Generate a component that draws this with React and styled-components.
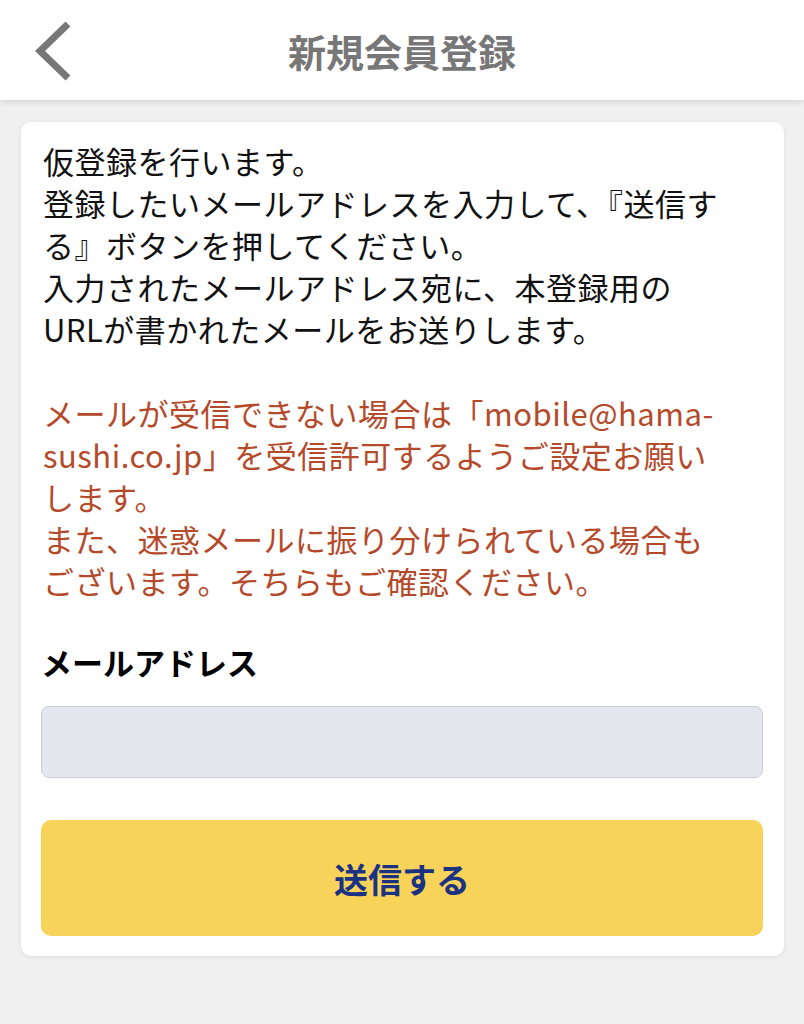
import styled, { createGlobalStyle } from "styled-components";

const GlobalStyle = createGlobalStyle`
  html, body {
    margin: 0;
    padding: 0;
    background: #f0f0f0;
    font-family: "Noto Sans CJK JP", "Noto Sans", sans-serif;
  }
  * { box-sizing: border-box; }
`;

const Page = styled.div`
  min-height: 1024px;
  background: #f0f0f0;
`;

const Header = styled.header`
  position: relative;
  height: 100px;
  background: #fff;
  display: flex;
  align-items: center;
  justify-content: center;
  box-shadow: 0 2px 6px rgba(0, 0, 0, 0.12);
`;

const BackButton = styled.button`
  position: absolute;
  left: 28px;
  top: 18px;
  width: 50px;
  height: 66px;
  border: none;
  background: none;
  padding: 0;
  cursor: pointer;
`;

const Title = styled.h1`
  margin: 0;
  font-size: 38px;
  font-weight: 700;
  color: #777;
  letter-spacing: 0;
`;

const Card = styled.main`
  margin: 22px 20px 0 21px;
  background: #fff;
  border-radius: 10px;
  box-shadow: 0 1px 4px rgba(0, 0, 0, 0.08);
  padding: 18px 21px 20px 20px;
`;

const Text = styled.p`
  margin: 0;
  padding-left: 2px;
  font-size: 31px;
  letter-spacing: 0.5px;
  line-height: 42px;
  color: ${(p) => (p.$warn ? "#b54a2b" : "#111")};
`;

const Spacer = styled.div`
  height: ${(p) => p.$h}px;
`;

const Label = styled.label`
  display: block;
  font-size: 31px;
  font-weight: 700;
  color: #000;
  line-height: 42px;
  margin: 39px 0 23px;
`;

const Input = styled.input`
  display: block;
  width: 100%;
  height: 72px;
  border: 1px solid #c9ccd3;
  border-radius: 8px;
  background: #e4e7ee;
  font-size: 28px;
  padding: 0 16px;
  outline: none;
`;

const SubmitButton = styled.button`
  display: block;
  width: 100%;
  height: 116px;
  margin-top: 42px;
  border: none;
  border-radius: 10px;
  background: #f7d35a;
  color: #1b3282;
  font-family: inherit;
  font-size: 34px;
  font-weight: 700;
  cursor: pointer;
`;

export default function App() {
  return (
    <Page>
      <GlobalStyle />
      <Header>
        <BackButton aria-label="戻る">
          <svg width="50" height="66" viewBox="0 0 50 66">
            <path
              d="M40 6 L12 33 L40 60"
              fill="none"
              stroke="#777"
              strokeWidth="7"
              strokeLinejoin="miter"
            />
          </svg>
        </BackButton>
        <Title>新規会員登録</Title>
      </Header>
      <Card>
        <Text>
          仮登録を行います。
          <br />
          登録したいメールアドレスを入力して、『送信す
          <br />
          る』ボタンを押してください。
          <br />
          入力されたメールアドレス宛に、本登録用の
          <br />
          URLが書かれたメールをお送りします。
        </Text>
        <Spacer $h={42} />
        <Text $warn>
          メールが受信できない場合は「mobile@hama-
          <br />
          sushi.co.jp」を受信許可するようご設定お願い
          <br />
          します。
          <br />
          また、迷惑メールに振り分けられている場合も
          <br />
          ございます。そちらもご確認ください。
        </Text>
        <Label htmlFor="email">メールアドレス</Label>
        <Input id="email" type="email" />
        <SubmitButton type="button">送信する</SubmitButton>
      </Card>
    </Page>
  );
}
